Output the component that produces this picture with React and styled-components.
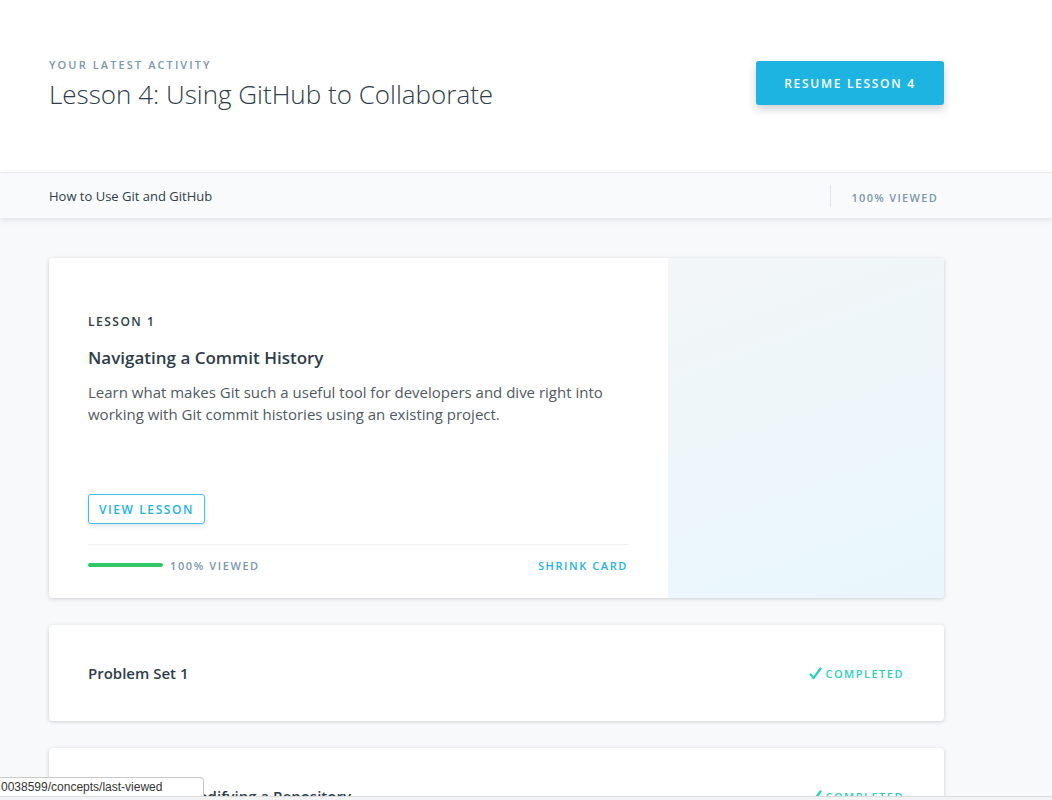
import React from "react";
import styled, { createGlobalStyle } from "styled-components";

const GlobalStyle = createGlobalStyle`
  html, body {
    margin: 0;
    padding: 0;
    background: #f7f9fa;
    font-family: "Open Sans", "Noto Sans", sans-serif;
    color: #2e3d49;
    overflow: hidden;
  }
`;

const lessons = [
    {title: "Problem Set 1", done: true},
    {title: "Creating and Modifying a Repository", done: true},
];

const CheckIcon = () => (
    <svg width="13" height="13" viewBox="0 0 13 13" fill="none">
        <path d="M1.5 7.4 L4.6 11 L11.5 1.5" stroke="#2ccfb8" strokeWidth="2.2"
              strokeLinecap="round" strokeLinejoin="round"/>
    </svg>
);

const App = () => {
    return <Page>
        <GlobalStyle/>
        <Header>
            <HeaderText>
                <Eyebrow>Your latest activity</Eyebrow>
                <HeaderTitle>Lesson 4: Using GitHub to Collaborate</HeaderTitle>
            </HeaderText>
            <ResumeButton>Resume Lesson 4</ResumeButton>
        </Header>
        <CourseBar>
            <CourseName>How to Use Git and GitHub</CourseName>
            <CourseProgress>100% Viewed</CourseProgress>
        </CourseBar>
        <Main>
            <LessonCard>
                <CardBody>
                    <LessonLabel>Lesson 1</LessonLabel>
                    <LessonTitle>Navigating a Commit History</LessonTitle>
                    <LessonSummary>
                        Learn what makes Git such a useful tool for developers and dive right into
                        working with Git commit histories using an existing project.
                    </LessonSummary>
                    <ViewButton>View Lesson</ViewButton>
                    <CardFooter>
                        <Progress>
                            <ProgressBar/>
                            <Muted>100% Viewed</Muted>
                        </Progress>
                        <LinkText>Shrink Card</LinkText>
                    </CardFooter>
                </CardBody>
                <CardArt/>
            </LessonCard>
            {lessons.map(item =>
                <RowCard key={item.title}>
                    <RowTitle>{item.title}</RowTitle>
                    {item.done && <Completed><CheckIcon/>Completed</Completed>}
                </RowCard>
            )}
        </Main>
        <StatusTip>0038599/concepts/last-viewed</StatusTip>
        <WindowEdge/>
    </Page>
}

const Page = styled.div`
  min-height: 800px;
  background: #f7f9fa;
`;

const Header = styled.header`
  height: 172px;
  box-sizing: border-box;
  background: #fff;
  display: flex;
  align-items: flex-start;
  padding: 57px 0 0 49px;
  width: 100%;
`;

const HeaderText = styled.div`
  width: 707px;
`;

const Eyebrow = styled.div`
  font-size: 11px;
  font-weight: 600;
  letter-spacing: 2.1px;
  text-transform: uppercase;
  color: #7d97ad;
  line-height: 16px;
`;

const HeaderTitle = styled.h1`
  margin: 2px 0 0;
  font-size: 26px;
  font-weight: 300;
  line-height: 38px;
  color: #2e3d49;
`;

const ResumeButton = styled.button`
  margin-top: 4px;
  width: 188px;
  height: 44px;
  border: 0;
  border-radius: 3px;
  background: #1db4e1;
  color: #fff;
  font-family: inherit;
  font-size: 12px;
  font-weight: 600;
  letter-spacing: 1.7px;
  text-transform: uppercase;
  box-shadow: 0 4px 8px rgba(46, 61, 73, 0.25);
`;

const CourseBar = styled.div`
  height: 46px;
  box-sizing: border-box;
  border-top: 1px solid #e6e9ee;
  background: #f9fafb;
  display: flex;
  align-items: center;
  padding: 0 114px 0 49px;
  box-shadow: 0 2px 6px rgba(46, 61, 73, 0.12);
  position: relative;
`;

const CourseName = styled.div`
  flex: 1;
  font-size: 13px;
  color: #2e3d49;
`;

const CourseProgress = styled.div`
  border-left: 1px solid #dbe2e8;
  padding-left: 21px;
  height: 22px;
  line-height: 26px;
  font-size: 11px;
  font-weight: 600;
  letter-spacing: 1.3px;
  text-transform: uppercase;
  color: #7d97ad;
`;

const Main = styled.main`
  width: 895px;
  padding: 40px 0 0 49px;
  display: flex;
  flex-direction: column;
  gap: 27px;
`;

const LessonCard = styled.section`
  display: flex;
  height: 340px;
  background: #fff;
  border-radius: 4px;
  overflow: hidden;
  box-shadow: 0 1px 4px rgba(46, 61, 73, 0.2);
`;

const CardBody = styled.div`
  width: 619px;
  box-sizing: border-box;
  padding: 55px 40px 0 39px;
  display: flex;
  flex-direction: column;
`;

const LessonLabel = styled.div`
  font-size: 12px;
  font-weight: 600;
  letter-spacing: 1.5px;
  text-transform: uppercase;
  line-height: 18px;
  color: #2e3d49;
`;

const LessonTitle = styled.h2`
  margin: 15px 0 0;
  font-size: 17px;
  font-weight: 600;
  line-height: 24px;
  color: #2e3d49;
`;

const LessonSummary = styled.p`
  margin: 11px 0 0;
  font-size: 15px;
  line-height: 22px;
  color: #4f5a63;
`;

const ViewButton = styled.button`
  margin-top: 69px;
  align-self: flex-start;
  width: 117px;
  height: 30px;
  background: #fff;
  border: 1px solid #3fc0ea;
  border-radius: 3px;
  color: #1db4e1;
  font-family: inherit;
  font-size: 12px;
  font-weight: 600;
  letter-spacing: 1.6px;
  text-transform: uppercase;
  box-shadow: 0 2px 5px rgba(46, 61, 73, 0.15);
`;

const CardFooter = styled.div`
  margin-top: 20px;
  border-top: 1px solid #eff1f3;
  height: 40px;
  display: flex;
  align-items: center;
  justify-content: space-between;
`;

const Progress = styled.div`
  display: flex;
  align-items: center;
  gap: 7px;
`;

const ProgressBar = styled.div`
  width: 75px;
  height: 4px;
  border-radius: 2px;
  background: #2ec866;
`;

const Muted = styled.span`
  font-size: 11px;
  font-weight: 600;
  letter-spacing: 1.6px;
  text-transform: uppercase;
  color: #7d97ad;
`;

const LinkText = styled(Muted)`
  color: #1db4e1;
`;

const CardArt = styled.div`
  flex: 1;
  background: linear-gradient(160deg, #f3f6f7 0%, #edf6fa 50%, #e8f7fd 100%);
`;

const RowCard = styled.section`
  height: 96px;
  flex-shrink: 0;
  box-sizing: border-box;
  padding: 0 40px 0 39px;
  background: #fff;
  border-radius: 4px;
  box-shadow: 0 1px 4px rgba(46, 61, 73, 0.2);
  display: flex;
  align-items: center;
  justify-content: space-between;
`;

const RowTitle = styled.div`
  font-size: 15px;
  font-weight: 600;
  color: #2e3d49;
`;

const Completed = styled.div`
  display: flex;
  align-items: center;
  gap: 3px;
  font-size: 11px;
  font-weight: 600;
  letter-spacing: 1.5px;
  text-transform: uppercase;
  color: #2ccfb8;
`;

const StatusTip = styled.div`
  position: fixed;
  left: 0;
  bottom: 3px;
  width: 204px;
  height: 20px;
  box-sizing: border-box;
  padding-left: 1px;
  background: #fff;
  border: 1px solid #c9c9c9;
  border-left: 0;
  border-bottom: 0;
  border-radius: 0 4px 0 0;
  font-family: "Liberation Sans", Arial, sans-serif;
  font-size: 12px;
  line-height: 19px;
  color: #333;
  white-space: nowrap;
  overflow: hidden;
`;

const WindowEdge = styled.div`
  position: fixed;
  left: 0;
  right: 0;
  bottom: 0;
  height: 3px;
  background: #f2f3f4;
  border-top: 1px solid #dcdcdc;
`;

export default App
